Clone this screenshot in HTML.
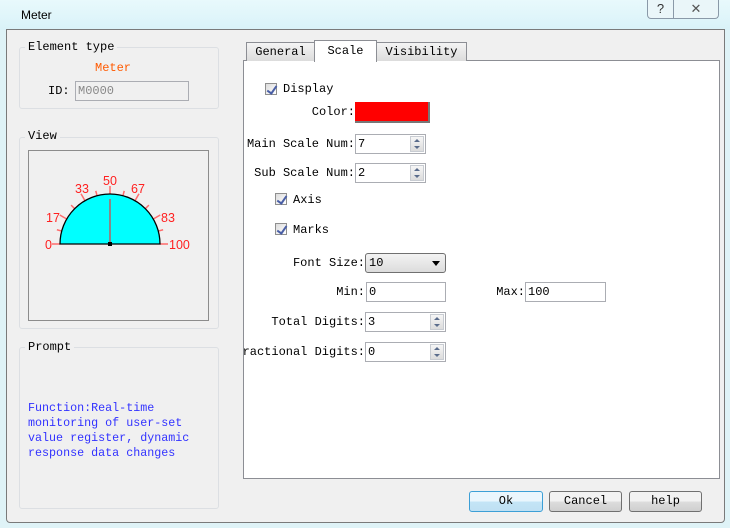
<!DOCTYPE html>
<html><head><meta charset="utf-8"><style>
*{margin:0;padding:0;box-sizing:border-box}
body{width:730px;height:528px;overflow:hidden;background:#dff3f7;font-family:"Liberation Mono","Noto Sans CJK SC",monospace;font-size:12px;color:#000;position:relative}
.a{position:absolute}
.t{position:absolute;white-space:nowrap;line-height:14px}
.r{text-align:right}
.clip{position:absolute;overflow:hidden;height:14px;line-height:14px;white-space:nowrap}
.clip span{position:absolute;right:0;top:0}
.grp{position:absolute;border:1px solid #dcdfe3;border-radius:3px}
.gl{position:absolute;background:#f0f0f0;padding:0 3px;line-height:14px}
.inp{position:absolute;background:#fff;border:1px solid #abadb3;height:20px;line-height:18px;padding-left:2px}
.spin{position:absolute;right:1px;top:1px;width:14px;height:16px;border:1px solid #c8ccd2;background:linear-gradient(#f6f6f6,#dcdcdc)}
.spin:before{content:"";position:absolute;left:3px;top:2px;border:3px solid transparent;border-bottom:3px solid #5a6c8c;border-top:0}
.spin:after{content:"";position:absolute;left:3px;top:9px;border:3px solid transparent;border-top:3px solid #5a6c8c;border-bottom:0}
.cb{position:absolute;width:12px;height:12px;border:1px solid #8f8f8f;background:linear-gradient(135deg,#dcdcdc,#fff)}
.cb:after{content:"";position:absolute;left:3px;top:0px;width:4px;height:8px;border:solid #4a5fa6;border-width:0 2px 2px 0;transform:rotate(35deg)}
.btn{position:absolute;height:21px;border:1px solid #707070;border-radius:3px;background:linear-gradient(#f2f2f2 50%,#dddddd 50%,#cfcfcf);text-align:center;line-height:19px}
</style></head><body>
<div class="a" style="left:0;top:0;width:730px;height:30px;background:linear-gradient(#e8f9fc,#d9f2f8)"></div>
<div class="t" style="left:21px;top:8px;font-family:'Liberation Sans',sans-serif;font-size:12px">Meter</div>
<div class="a" style="left:647px;top:0;width:27px;height:19px;border:1px solid #8a99a8;border-top:0;border-radius:0 0 0 4px;background:#eaf6f9;text-align:center;font-family:'Liberation Sans';font-size:13px;line-height:18px;color:#333">?</div>
<div class="a" style="left:674px;top:0;width:45px;height:19px;border:1px solid #8a99a8;border-top:0;border-left:0;border-radius:0 0 4px 0;background:#eaf6f9;text-align:center;font-family:'Liberation Sans';font-size:13px;line-height:18px;color:#555">✕</div>
<div class="a" style="left:6px;top:29px;width:719px;height:494px;background:#f0f0f0;border:1px solid #7a7a7a;border-radius:0 0 4px 4px"></div>

<div class="grp" style="left:19px;top:47px;width:200px;height:62px"></div>
<div class="gl" style="left:25px;top:40px">Element type</div>
<div class="t" style="left:95px;top:61px;color:#ff5a00">Meter</div>
<div class="t" style="left:48px;top:84px">ID:</div>
<div class="inp" style="left:75px;top:81px;width:114px;background:#f0f0f0;color:#888">M0000</div>

<div class="grp" style="left:19px;top:137px;width:200px;height:192px"></div>
<div class="gl" style="left:25px;top:129px">View</div>
<div class="a" style="left:28px;top:150px;width:181px;height:171px;border:1px solid #8c8c8c"></div>
<svg class="a" style="left:0;top:0" width="730" height="528">
<g stroke="#ff6b6b" stroke-width="1.5">
<line x1="60" y1="244" x2="52" y2="244"/>
<g transform="rotate(30 110 244)"><line x1="60" y1="244" x2="52" y2="244"/></g>
<g transform="rotate(60 110 244)"><line x1="60" y1="244" x2="52" y2="244"/></g>
<g transform="rotate(90 110 244)"><line x1="60" y1="244" x2="52" y2="244"/></g>
<g transform="rotate(120 110 244)"><line x1="60" y1="244" x2="52" y2="244"/></g>
<g transform="rotate(150 110 244)"><line x1="60" y1="244" x2="52" y2="244"/></g>
<g transform="rotate(180 110 244)"><line x1="60" y1="244" x2="52" y2="244"/></g>
<g transform="rotate(15 110 244)"><line x1="60" y1="244" x2="55" y2="244"/></g>
<g transform="rotate(45 110 244)"><line x1="60" y1="244" x2="55" y2="244"/></g>
<g transform="rotate(75 110 244)"><line x1="60" y1="244" x2="55" y2="244"/></g>
<g transform="rotate(105 110 244)"><line x1="60" y1="244" x2="55" y2="244"/></g>
<g transform="rotate(135 110 244)"><line x1="60" y1="244" x2="55" y2="244"/></g>
<g transform="rotate(165 110 244)"><line x1="60" y1="244" x2="55" y2="244"/></g>
</g>
<path d="M60 244 A50 50 0 0 1 160 244 Z" fill="#00ffff" stroke="#000" stroke-width="1.3"/>
<line x1="110" y1="244" x2="110" y2="199" stroke="#888" stroke-width="2"/>
<rect x="108" y="242" width="4" height="4" fill="#000"/>
<g fill="#ff2020" font-family="Liberation Sans,sans-serif" font-size="12.5">
<text x="45" y="249">0</text><text x="46" y="222">17</text><text x="75" y="193">33</text><text x="103" y="185">50</text><text x="131" y="193">67</text><text x="161" y="222">83</text><text x="169" y="249">100</text>
</g>
</svg>

<div class="grp" style="left:19px;top:347px;width:200px;height:162px"></div>
<div class="gl" style="left:25px;top:340px">Prompt</div>
<div class="t" style="left:28px;top:401px;color:#3232ff;line-height:15px;font-size:11.7px">Function:Real-time<br>monitoring of user-set<br>value register, dynamic<br>response data changes</div>

<div class="a" style="left:243px;top:60px;width:477px;height:419px;background:#fff;border:1px solid #8c8e94"></div>
<div class="a" style="left:246px;top:42px;width:69px;height:19px;border:1px solid #8c8e94;border-bottom:0;background:linear-gradient(#f4f4f4,#dcdcdc);text-align:center;line-height:18px">General</div>
<div class="a" style="left:376px;top:42px;width:91px;height:19px;border:1px solid #8c8e94;border-bottom:0;background:linear-gradient(#f4f4f4,#dcdcdc);text-align:center;line-height:18px">Visibility</div>
<div class="a" style="left:314px;top:40px;width:63px;height:22px;border:1px solid #8c8e94;border-bottom:0;background:#fff;text-align:center;line-height:20px">Scale</div>

<div class="cb" style="left:265px;top:83px"></div><div class="t" style="left:283px;top:82px">Display</div>
<div class="t r" style="left:254px;width:101px;top:105px">Color:</div>
<div class="a" style="left:355px;top:102px;width:75px;height:21px;background:#ff0000;border-right:2px solid #777;border-bottom:2px solid #777"></div>
<div class="clip" style="left:244px;width:111px;top:137px"><span>Main Scale Num:</span></div>
<div class="inp" style="left:355px;top:134px;width:71px">7<div class="spin"></div></div>
<div class="t r" style="left:240px;width:115px;top:166px">Sub Scale Num:</div>
<div class="inp" style="left:355px;top:163px;width:71px">2<div class="spin"></div></div>
<div class="cb" style="left:275px;top:193px"></div><div class="t" style="left:293px;top:193px">Axis</div>
<div class="cb" style="left:275px;top:223px"></div><div class="t" style="left:293px;top:223px">Marks</div>
<div class="t r" style="left:250px;width:115px;top:256px">Font Size:</div>
<div class="a" style="left:365px;top:253px;width:81px;height:20px;border:1px solid #707070;border-radius:3px;background:linear-gradient(#f3f3f3,#dcdcdc);line-height:18px;padding-left:3px">10<span class="a" style="right:5px;top:7px;border:4px solid transparent;border-top:5px solid #000;border-bottom:0"></span></div>
<div class="t r" style="left:250px;width:115px;top:285px">Min:</div>
<div class="inp" style="left:366px;top:282px;width:80px">0</div>
<div class="t r" style="left:450px;width:75px;top:285px">Max:</div>
<div class="inp" style="left:525px;top:282px;width:81px">100</div>
<div class="t r" style="left:250px;width:115px;top:315px">Total Digits:</div>
<div class="inp" style="left:365px;top:312px;width:81px">3<div class="spin"></div></div>
<div class="clip" style="left:244px;width:121px;top:345px"><span>Fractional Digits:</span></div>
<div class="inp" style="left:365px;top:342px;width:81px">0<div class="spin"></div></div>

<div class="btn" style="left:469px;top:491px;width:74px;border-color:#3c9fd6;background:linear-gradient(#eaf6fd 50%,#c4e5f6 50%,#bfe0f3)">Ok</div>
<div class="btn" style="left:549px;top:491px;width:73px">Cancel</div>
<div class="btn" style="left:629px;top:491px;width:73px">help</div>
</body></html>
